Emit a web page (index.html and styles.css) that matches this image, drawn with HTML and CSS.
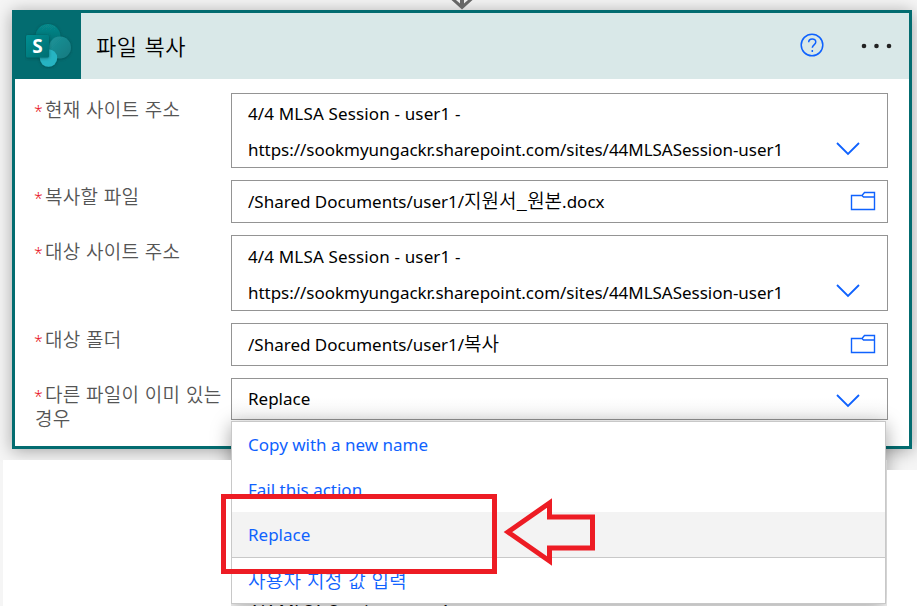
FILE: index.html
```html
<!DOCTYPE html>
<html lang="ko">
<head>
<meta charset="utf-8">
<title>파일 복사</title>
<link rel="stylesheet" href="styles.css">
</head>
<body>
<main class="canvas">
  <svg class="connector" width="24" height="10" viewBox="0 0 24 10"><path d="M10 0h4v3.500L18 0h4.500L12 9.500 1.500 0H6l4 3.500z" fill="#666"/></svg>
  <section class="card">
    <header class="card-header">
      <div class="brand">
        <svg width="48" height="46" viewBox="0 0 48 46">
          <defs>
            <linearGradient id="square" x1="0" y1="0" x2="1" y2="1"><stop offset="0" stop-color="#058f92"/><stop offset="1" stop-color="#026d71"/></linearGradient>
            <linearGradient id="top" x1="0" y1="0" x2="0" y2="1"><stop offset="0" stop-color="#078a8c"/><stop offset="1" stop-color="#036569"/></linearGradient>
            <linearGradient id="side" x1="0" y1="0" x2="1" y2="1"><stop offset="0" stop-color="#1d9499"/><stop offset="1" stop-color="#12797f"/></linearGradient>
            <filter id="soft" x="-30%" y="-30%" width="160%" height="160%"><feDropShadow dx="0" dy="0.500" stdDeviation="1.500" flood-color="#003c40" flood-opacity=".65"/></filter>
          </defs>
          <g filter="url(#soft)"><circle cx="23" cy="13.500" r="12.500" fill="url(#top)"/><circle cx="35" cy="24.500" r="11" fill="url(#side)"/><circle cx="23.500" cy="35" r="8.700" fill="#27b4c2"/></g>
          <rect x="1" y="12" width="23" height="22.500" rx="1.500" fill="url(#square)" filter="url(#soft)"/>
          <text x="12.500" y="29.500" class="brand-letter">S</text>
        </svg>
      </div>
      <h1 class="title">파일 복사</h1>
      <svg class="help" width="24" height="24" viewBox="0 0 24 24"><circle cx="12" cy="12" r="10.800"/><path d="M8.700 9.200c0-4.400 7.100-4.300 7.100-.2 0 2.800-3.500 2.900-3.500 5.700M12.300 17v2"/></svg>
      <svg class="more" width="32" height="6" viewBox="0 0 32 6"><circle cx="3" cy="3" r="2.300"/><circle cx="15.500" cy="3" r="2.300"/><circle cx="28" cy="3" r="2.300"/></svg>
    </header>
    <div class="fields">
      <div class="row">
        <div class="label"><span class="star">*</span>현재 사이트 주소</div>
        <div class="input tall"><div class="value"><span class="site">4/4 MLSA Session - user1 -</span><br><span class="url">https://sookmyungackr.sharepoint.com/sites/44MLSASession-user1</span></div>
          <svg class="chevron" width="26" height="16" viewBox="0 0 26 16"><path d="M2 2l11 11L24 2"/></svg></div>
      </div>
      <div class="row">
        <div class="label"><span class="star">*</span>복사할 파일</div>
        <div class="input"><div class="value">/Shared Documents/user1/<span class="ko">지원서_원본</span>.docx</div>
          <svg class="folder" width="26" height="20" viewBox="0 0 26 20"><path d="M1.500 4.500H12l2.500-3h10v17h-23zM12 4.500l1.500 1.500h11"/></svg></div>
      </div>
      <div class="row">
        <div class="label"><span class="star">*</span>대상 사이트 주소</div>
        <div class="input tall second"><div class="value"><span class="site">4/4 MLSA Session - user1 -</span><br><span class="url">https://sookmyungackr.sharepoint.com/sites/44MLSASession-user1</span></div>
          <svg class="chevron" width="26" height="16" viewBox="0 0 26 16"><path d="M2 2l11 11L24 2"/></svg></div>
      </div>
      <div class="row">
        <div class="label"><span class="star">*</span>대상 폴더</div>
        <div class="input"><div class="value">/Shared Documents/user1/<span class="ko">복사</span></div>
          <svg class="folder" width="26" height="20" viewBox="0 0 26 20"><path d="M1.500 4.500H12l2.500-3h10v17h-23zM12 4.500l1.500 1.500h11"/></svg></div>
      </div>
      <div class="row">
        <div class="label"><span class="star">*</span>다른 파일이 이미 있는<br>경우</div>
        <div class="input select"><div class="value">Replace</div>
          <svg class="chevron" width="26" height="16" viewBox="0 0 26 16"><path d="M2 2l11 11L24 2"/></svg></div>
      </div>
    </div>
  </section>
  <div class="lower"></div>
  <div class="lower-right"></div>
  <div class="under">4/4 MLSA Session - user1 -</div>
  <div class="menu">
    <div class="item">Copy with a new name</div>
    <div class="item">Fail this action</div>
    <div class="item active">Replace</div>
    <div class="item custom">사용자 지정 값 입력</div>
  </div>
  <div class="highlight"></div>
  <svg class="pointer" width="94" height="70" viewBox="0 0 94 70"><path d="M5 35L46.500 6v14H89.500v31H46.500V64z"/></svg>
</main>
</body>
</html>
```

FILE: styles.css
```css
* { box-sizing: border-box; }
body {
  margin: 0;
  overflow: hidden;
  background: #f5f5f5;
  font-family: "Noto Sans", "Noto Sans CJK KR", sans-serif;
  font-size: 17px;
  color: #000;
}
.canvas { position: relative; width: 917px; height: 606px; padding: 10px 5px 0 12px; overflow: hidden; }
.connector { position: absolute; left: 450px; top: 0; }
.card {
  width: 900px;
  height: 439px;
  background: #fff;
  border: 3px solid #036c70;
  box-shadow: 0 2px 16px rgba(0, 0, 0, .33);
}
.card-header { display: flex; align-items: center; height: 66px; background: #d9e8e8; padding-right: 16px; }
.brand { width: 66px; height: 66px; background: #036c70; padding: 10px 0 0 10px; }
.brand-letter { font: 700 19px "Open Sans", sans-serif; fill: #fff; text-anchor: middle; }
.title { flex: 1; margin: -3px 0 0 15px; font: 350 22px/32px "Noto Sans CJK KR", sans-serif; letter-spacing: .6px; }
.help { fill: none; stroke: #0f62fe; stroke-width: 1.5; margin: -2px 37px 0 0; }
.more { fill: #222; margin-top: -1px; }
.fields { display: flex; flex-direction: column; gap: 12px; padding: 14px 21px 0 20px; }
.row { display: flex; align-items: flex-start; }
.label {
  width: 196px;
  height: 42px;
  padding-top: 4px;
  font: 350 19px/23px "Noto Sans CJK KR", sans-serif;
  letter-spacing: .25px;
  color: #555;
  white-space: nowrap;
}
.star { color: #e81123; font-family: "Noto Sans", sans-serif; margin-right: 2px; margin-left: -1px; font-size: 16px; line-height: 20px; }
.input {
  display: flex;
  align-items: center;
  justify-content: space-between;
  width: 657px;
  height: 43px;
  border: 1px solid #949494;
  padding: 0 11px 0 16px;
}
.value { line-height: 36px; white-space: nowrap; }
.site { letter-spacing: .15px; }
.url { letter-spacing: -.03px; }
.ko { font-family: "Noto Sans CJK KR", sans-serif; font-size: 19px; font-weight: 350; line-height: 20px; }
.tall { height: 75px; align-items: flex-end; padding-right: 26px; }
.second { height: 76px; }
.tall .value { margin-bottom: -1px; }
.tall .chevron { margin-bottom: 10px; }
.second .chevron { margin-bottom: 11px; }
.select { height: 42px; padding-right: 26px; background: linear-gradient(#fff 45%, #f7f7f7); }
.select .chevron { margin-top: 3px; }
.chevron { fill: none; stroke: #0f62fe; stroke-width: 1.8; }
.folder { fill: none; stroke: #0f62fe; stroke-width: 1.4; margin-top: -2px; }
.lower { position: absolute; left: 3px; top: 460px; width: 884px; height: 146px; background: #fff; }
.lower-right { position: absolute; left: 887px; top: 470px; width: 30px; height: 136px; background: #fff; }
.under { position: absolute; left: 248px; top: 599px; line-height: 24px; letter-spacing: .15px; }
.menu {
  position: absolute;
  left: 231px;
  top: 421px;
  width: 655px;
  height: 183px;
  background: #fff;
  border: 1px solid #c8c8c8;
  box-shadow: 0 4px 18px rgba(0, 0, 0, .36);
  clip-path: polygon(-30px -20px, 690px -20px, 690px 49px, 656px 49px, 656px 190px, 0 190px, 0 39px, -30px 39px);
}
.item { height: 45px; padding-left: 16px; line-height: 45px; color: #0f62fe; white-space: nowrap; }
.active { background: #f3f3f3; }
.custom { height: 46px; border-top: 1px solid #c8c8c8; font: 350 19px/43px "Noto Sans CJK KR", sans-serif; letter-spacing: .3px; }
.highlight { position: absolute; left: 221px; top: 494px; width: 276px; height: 80px; border: 5px solid #ed1c24; }
.pointer { position: absolute; left: 503px; top: 497px; fill: none; stroke: #ed1c24; stroke-width: 5; }
```
